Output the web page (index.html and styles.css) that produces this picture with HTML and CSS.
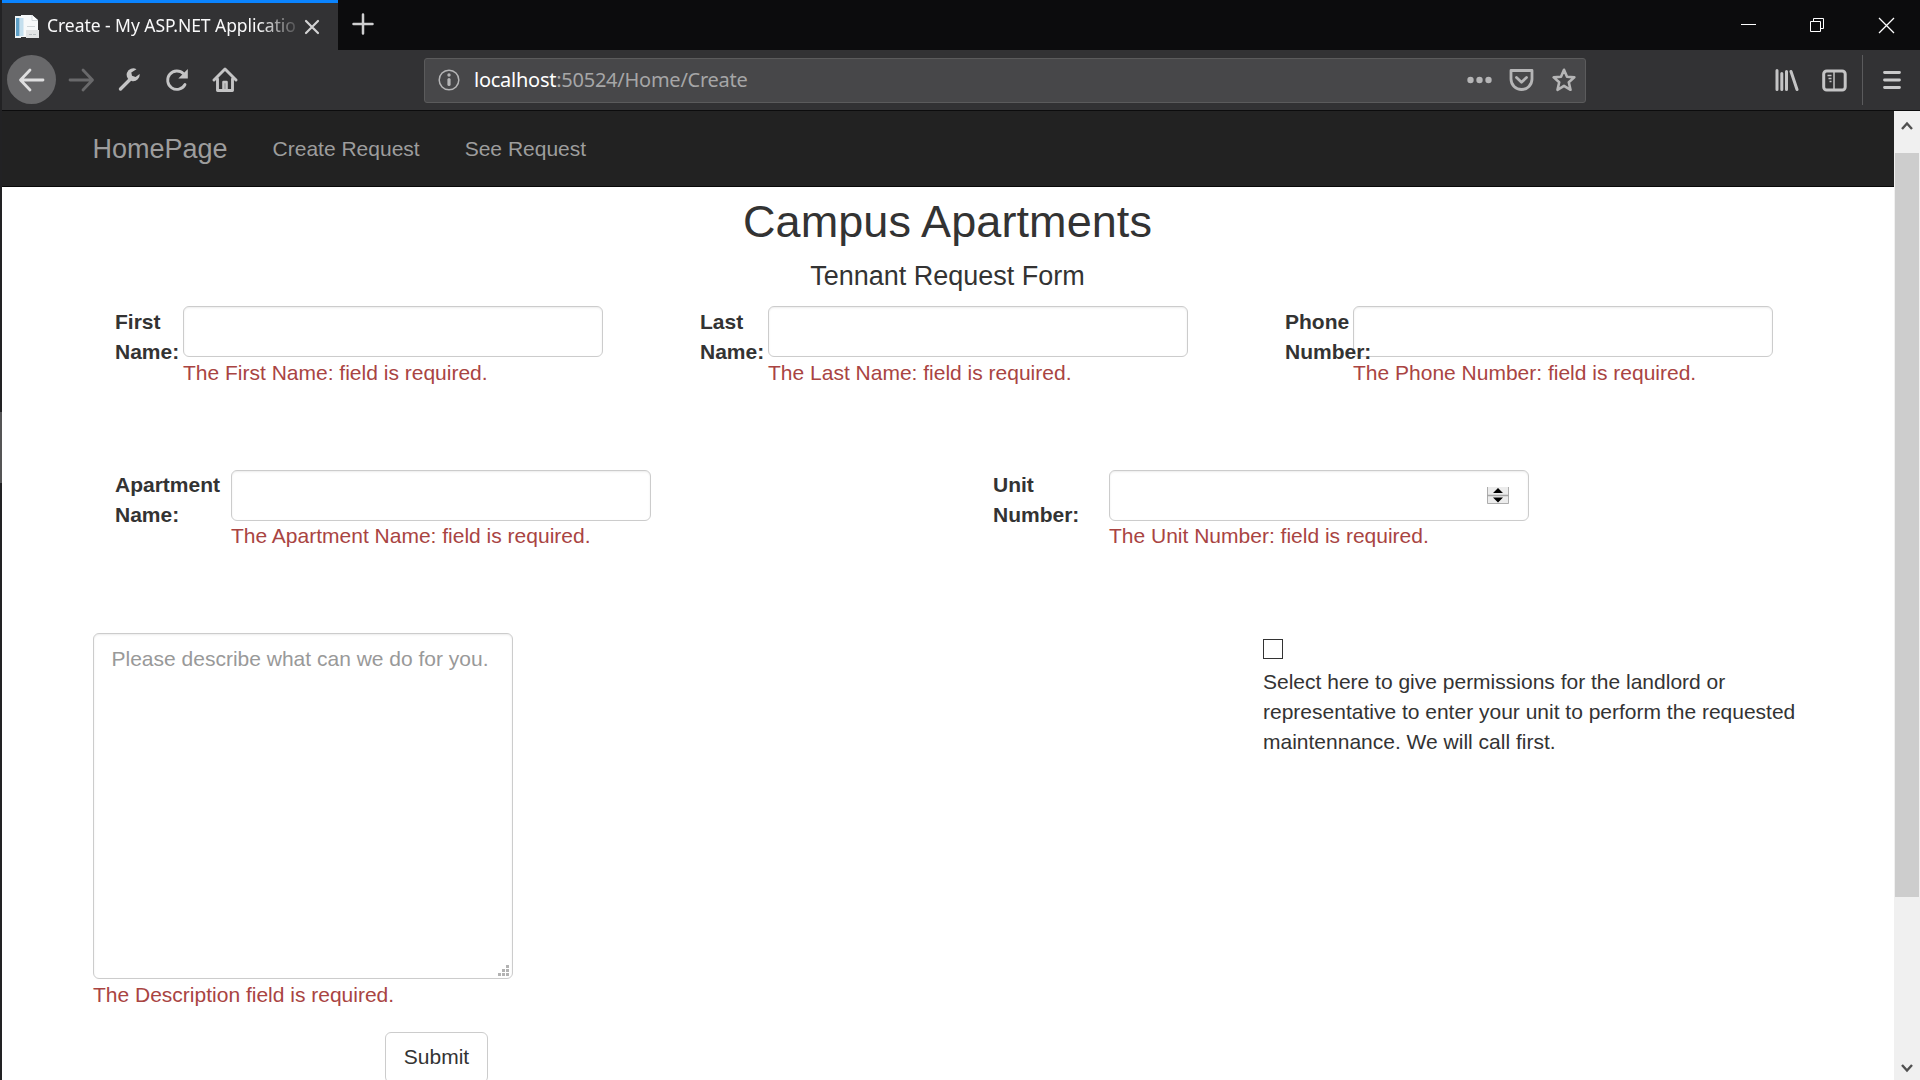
FILE: index.html
```html
<!DOCTYPE html>
<html lang="en">
<head>
<meta charset="utf-8">
<title>Create - My ASP.NET Application</title>
<link rel="stylesheet" href="styles.css">
</head>
<body>
<div class="window">
  <header class="tabbar">
    <div class="tab">
      <svg class="favicon" width="26" height="25" viewBox="0 0 26 25"><path d="M1 2h6v22H1z" fill="#eef4f7"/><path d="M2 4h3.500v18H2z" fill="#5e9fc6"/><path d="M7 1h11l6 5v17H7z" fill="#f7f9fa"/><path d="M6 4h3.500v18H6z" fill="#c4dfee"/><path d="M18 1v5.500h6" fill="#fff" stroke="#d5dbdd"/><path d="M13 12.500h8" stroke="#cfd5d8"/><path d="M12 16h13v8H12z" fill="#e2e4e5"/><path d="M15 20.500h3m1 0h3" stroke="#b8bfc2"/></svg>
      <span class="tab-title">Create - My ASP.NET Applicatio</span>
      <svg class="tab-close" width="16" height="16" viewBox="0 0 16 16"><path d="M2 2l12 12M14 2L2 14" stroke="#d2d2d3" stroke-width="2.200" stroke-linecap="round"/></svg>
    </div>
    <svg class="new-tab" width="22" height="22" viewBox="0 0 22 22"><path d="M11 1.500v19M1.500 11h19" stroke="#cfcfd0" stroke-width="2.500" stroke-linecap="round"/></svg>
    <div class="window-buttons">
      <svg width="16" height="16" viewBox="0 0 16 16"><path d="M1 7.500h15" stroke="#fff"/></svg>
      <svg width="16" height="16" viewBox="0 0 16 16" fill="none" stroke="#fff"><path d="M1.500 4.500h10v10h-10zM4.500 4.500v-3h10v10h-3"/></svg>
      <svg width="17" height="17" viewBox="0 0 17 17"><path d="M1 1l15 15M16 1L1 16" stroke="#fff" stroke-width="1.300"/></svg>
    </div>
  </header>

  <div class="toolbar">
    <div class="nav-icons">
      <div class="back"><svg width="27" height="24" viewBox="0 0 27 24" fill="none" stroke="#dededf" stroke-width="2.800" stroke-linecap="round" stroke-linejoin="round"><path d="M25 12H3M12 2L2.500 12l9.500 10"/></svg></div>
      <svg class="forward" width="27" height="24" viewBox="0 0 27 24" fill="none" stroke="#69696b" stroke-width="2.800" stroke-linecap="round" stroke-linejoin="round"><path d="M2 12h22M15 2l9.500 10L15 22"/></svg>
      <svg class="wrench" width="23" height="24" viewBox="0 0 23 24"><path d="M2.500 21L13 10.500" stroke="#c4c4c5" stroke-width="3.400" stroke-linecap="round"/><path d="M18.500 1.200A6.500 6.500 0 1 0 21.600 6l-4 3-3.600-1.200-.7-3.300z" fill="#c4c4c5"/></svg>
      <svg class="reload" width="24" height="24" viewBox="0 0 24 24" fill="none"><path d="M20 16.500A9.200 9.200 0 1 1 18.500 5.800L20 8" stroke="#c4c4c5" stroke-width="2.800" stroke-linecap="round"/><path d="M22.800 1v9.500h-9.500z" fill="#c4c4c5"/></svg>
      <svg class="home" width="26" height="26" viewBox="0 0 26 26" fill="none" stroke="#c4c4c5" stroke-linejoin="round" stroke-linecap="round"><path d="M2 13L13 2l11 11M5.500 12v11.500h15V12" stroke-width="2.900"/><path d="M11.500 22v-7h3v7" stroke-width="2.600"/></svg>
    </div>
    <div class="urlbar">
      <svg width="22" height="22" viewBox="0 0 22 22"><circle cx="11" cy="11" r="9.800" fill="none" stroke="#b5b5b6" stroke-width="1.500"/><circle cx="11" cy="6" r="1.700" fill="#b5b5b6"/><path d="M11 10.500v5" stroke="#b5b5b6" stroke-width="3.200" stroke-linecap="round"/></svg>
      <div class="url"><span class="host">localhost</span>:50524/Home/Create</div>
      <svg class="dots" width="25" height="24" viewBox="0 0 25 24" fill="#b5b5b6"><circle cx="3.500" cy="12" r="3.200"/><circle cx="12.500" cy="12" r="3.200"/><circle cx="21.500" cy="12" r="3.200"/></svg>
      <svg class="pocket" width="25" height="24" viewBox="0 0 25 24" fill="none" stroke="#b5b5b6" stroke-width="2.800" stroke-linejoin="round" stroke-linecap="round"><path d="M2 2.500h21v8.500a10.500 10.500 0 0 1-21 0z"/><path d="M7.500 9.500l5 4.700 5-4.700"/></svg>
      <svg class="star" width="24" height="24" viewBox="0 0 24 24" fill="none" stroke="#b5b5b6" stroke-width="2.600" stroke-linejoin="round"><path d="M12 1.800l3 6.900 7.300.7-5.500 4.900 1.700 7.500L12 17.900l-6.500 3.900 1.700-7.500L1.700 9.400 9 8.700z"/></svg>
    </div>
    <div class="tools">
      <svg class="library" width="24" height="24" viewBox="0 0 24 24" fill="none" stroke="#c4c4c5" stroke-width="3" stroke-linecap="round"><path d="M2 2.500v19M6.800 5.500v16M11.500 3.500v18M16 3.500l6 18"/></svg>
      <svg class="sidebar" width="25" height="23" viewBox="0 0 25 23" fill="none" stroke="#c4c4c5"><rect x="1.700" y="2" width="21.500" height="19" rx="3" stroke-width="3"/><path d="M12 2v19" stroke-width="1.500"/><path d="M5.500 6.500h4M6.500 9.500h3M7.500 12.500h2" stroke-width="1.300"/></svg>
      <svg class="menu" width="20" height="20" viewBox="0 0 20 20" stroke="#c9c9ca" stroke-width="2.800" stroke-linecap="round"><path d="M2.500 2.500h15M2.500 10h15M2.500 17.500h15"/></svg>
    </div>
  </div>

  <div class="viewport">
    <div class="page">
      <nav class="navbar">
        <a class="brand">HomePage</a>
        <a class="nav-link">Create Request</a>
        <a class="nav-link">See Request</a>
      </nav>
      <main class="container">
        <h2 class="title">Campus Apartments</h2>
        <h4 class="subtitle">Tennant Request Form</h4>
        <form class="form">
          <div class="row thirds">
            <div class="field">
              <label class="label" for="first">First<br>Name:</label>
              <div class="control"><input class="input" id="first" type="text"><span class="error">The First Name: field is required.</span></div>
            </div>
            <div class="field">
              <label class="label" for="last">Last<br>Name:</label>
              <div class="control"><input class="input" id="last" type="text"><span class="error">The Last Name: field is required.</span></div>
            </div>
            <div class="field">
              <label class="label" for="phone">Phone<br>Number:</label>
              <div class="control"><input class="input" id="phone" type="text"><span class="error">The Phone Number: field is required.</span></div>
            </div>
          </div>
          <div class="row halves">
            <div class="field">
              <label class="label" for="apartment">Apartment<br>Name:</label>
              <div class="control"><input class="input" id="apartment" type="text"><span class="error">The Apartment Name: field is required.</span></div>
            </div>
            <div class="field">
              <label class="label" for="unit">Unit<br>Number:</label>
              <div class="control">
                <input class="input" id="unit" type="text">
                <svg class="spinner" width="22" height="20" viewBox="0 0 22 20"><path d="M0 2h22v17H0z" fill="#ececec"/><path d="M.5 2v16.500h21V2" fill="none" stroke="#adadad"/><path d="M0 10.500h22" stroke="#a6a6a6" stroke-width="1.500"/><path d="M6 8l5-5 5 5zM6 12.500h10l-5 5z" fill="#000"/></svg>
                <span class="error">The Unit Number: field is required.</span>
              </div>
            </div>
          </div>
          <div class="row details">
            <div class="description">
              <textarea class="input textarea" placeholder="Please describe what can we do for you."></textarea>
              <svg class="grip" width="12" height="12" viewBox="0 0 12 12" fill="#b3b3b3"><path d="M8 0h3v3H8zM4 4h3v3H4zM8 4h3v3H8zM0 8h3v3H0zM4 8h3v3H4zM8 8h3v3H8z"/></svg>
              <span class="error">The Description field is required.</span>
              <button class="submit" type="button">Submit</button>
            </div>
            <div class="permission">
              <input class="checkbox" type="checkbox" aria-label="Permission to enter">
              <p class="permission-text">Select here to give permissions for the landlord or representative to enter your unit to perform the requested maintennance. We will call first.</p>
            </div>
          </div>
        </form>
      </main>
    </div>
    <div class="scrollbar">
      <svg width="12" height="10" viewBox="0 0 12 10"><path d="M1 8l5-5.500L11 8" fill="none" stroke="#505050" stroke-width="2.400"/></svg>
      <div class="thumb"></div>
      <svg width="12" height="10" viewBox="0 0 12 10"><path d="M1 2l5 5.500L11 2" fill="none" stroke="#505050" stroke-width="2.400"/></svg>
    </div>
  </div>
</div>
</body>
</html>
```
FILE: styles.css
```css
* {
  box-sizing: border-box;
}

body {
  margin: 0;
  overflow: hidden;
  font-family: "Liberation Sans", Arial, sans-serif;
  font-size: 21px;
  line-height: 30px;
  color: #333;
}

svg {
  display: block;
  flex: none;
}

.window {
  display: flex;
  flex-direction: column;
  height: 1080px;
  border-left: 2px solid #222224;
  border-image: linear-gradient(#222224 38.200%, #555556 38.200%, #555556 44.700%, #222224 44.700%) 1;
  overflow: hidden;
}

/* Browser chrome */
.tabbar {
  display: flex;
  flex: none;
  height: 50px;
  background: #0c0c0d;
}

.tab {
  display: flex;
  align-items: center;
  width: 336px;
  height: 50px;
  padding: 0 18px 0 12px;
  border-top: 3px solid #0a84ff;
  background: #323234;
}

.tab-title {
  flex: 1;
  min-width: 0;
  margin: 0 4px 0 7px;
  padding-bottom: 3px;
  font-family: "Noto Sans", sans-serif;
  font-size: 17.500px;
  letter-spacing: -0.050px;
  white-space: nowrap;
  color: #f9f9fa;
  -webkit-mask-image: linear-gradient(90deg, #000 84%, transparent 101%);
  mask-image: linear-gradient(90deg, #000 84%, transparent 101%);
}

.new-tab {
  margin: 13px 0 0 14px;
}

.window-buttons {
  display: flex;
  align-items: center;
  gap: 53px;
  margin-left: auto;
  padding-right: 25px;
}

.toolbar {
  display: flex;
  flex: none;
  align-items: center;
  height: 61px;
  border-bottom: 1px solid #0c0c0d;
  background: #323234;
}

.nav-icons {
  display: flex;
  align-items: center;
  width: 422px;
  padding: 0 0 1px 5px;
}

.back {
  display: flex;
  align-items: center;
  justify-content: center;
  width: 49px;
  height: 49px;
  border-radius: 50%;
  background: #68686a;
}

.forward {
  margin-left: 12px;
}

.wrench {
  margin-left: 23px;
}

.reload {
  margin-left: 24px;
}

.home {
  margin-left: 23px;
}

.urlbar {
  display: flex;
  align-items: center;
  width: 1162px;
  height: 45px;
  padding: 0 9px 0 13px;
  border: 1px solid #5b5b5c;
  border-radius: 3px;
  background: #474749;
}

.url {
  flex: 1;
  margin-left: 14px;
  font-family: "Noto Sans", sans-serif;
  font-size: 20px;
  letter-spacing: -0.250px;
  color: #a6a6a7;
}

.host {
  color: #fff;
}

.pocket {
  margin-left: 17px;
}

.star {
  margin-left: 18px;
}

.tools {
  display: flex;
  flex: 1;
  align-items: center;
  height: 100%;
  padding: 0 18px 0 189px;
}

.sidebar {
  margin-left: 23px;
}

.menu {
  box-sizing: content-box;
  margin-left: 15px;
  padding: 15px 0 15px 19px;
  border-left: 1px solid #5b5b5d;
}

/* Page */
.viewport {
  display: flex;
  flex: 1;
  min-height: 0;
}

.page {
  flex: 1;
  min-width: 0;
  overflow: hidden;
  background: #fff;
}

.navbar {
  display: flex;
  align-items: center;
  gap: 45px;
  height: 76px;
  padding-left: 90.500px;
  border-bottom: 1px solid #080808;
  background: #222;
  color: #9d9d9d;
}

.brand {
  font-size: 27px;
}

.container {
  width: 1755px;
  margin-left: 91px;
}

.title,
.subtitle {
  margin: 0;
  padding-right: 46px;
  font-weight: 400;
  text-align: center;
}

.title {
  padding-top: 10px;
  font-size: 45px;
  line-height: 50px;
  letter-spacing: 0.080px;
}

.subtitle {
  padding-top: 14px;
  font-size: 27px;
  line-height: 30px;
}

.form {
  padding-top: 15px;
}

.row {
  display: grid;
}

.thirds {
  grid-template-columns: repeat(3, 585px);
  height: 164px;
}

.halves {
  grid-template-columns: repeat(2, 878px);
  height: 163px;
}

.field {
  display: flex;
  align-items: flex-start;
  padding-left: 22px;
}

.label {
  position: relative;
  z-index: 1;
  flex: none;
  width: 68px;
  white-space: nowrap;
  font-weight: 700;
}

.halves .label {
  width: 116px;
}

.control {
  position: relative;
  display: flex;
  flex-direction: column;
}

.input {
  display: block;
  width: 420px;
  height: 51px;
  margin: 0;
  padding: 9px 18px;
  border: 1px solid #ccc;
  border-radius: 6px;
  background: #fff;
  box-shadow: inset 0 1px 2px rgba(0, 0, 0, 0.075);
  font: inherit;
}

.error {
  display: block;
  color: #a94442;
}

.thirds .label,
.thirds .error,
.description .error {
  padding-top: 1px;
}

.spinner {
  position: absolute;
  top: 15px;
  right: 20px;
}

.details {
  grid-template-columns: 1170px 540px;
}

.description {
  position: relative;
}

.textarea {
  height: 346px;
  padding: 10px 17.500px;
  resize: none;
  overflow: hidden;
}

.textarea::placeholder {
  color: #999;
  opacity: 1;
}

.grip {
  position: absolute;
  top: 332px;
  left: 405px;
}

.submit {
  display: block;
  width: 103px;
  height: 51px;
  margin: 22px 0 0 292px;
  padding: 0 0 2px;
  border: 1px solid #ccc;
  border-radius: 6px;
  background: #fff;
  font: inherit;
  color: #333;
}

.checkbox {
  display: block;
  width: 20px;
  height: 20px;
  margin: 6px 0 0;
  appearance: none;
  border: 1px solid #333;
  background: #fff;
}

.permission-text {
  margin: 8px 0 0;
}

.scrollbar {
  display: flex;
  flex: none;
  flex-direction: column;
  align-items: center;
  width: 26px;
  padding: 10px 0 7px;
  background: #f0f0f0;
}

.thumb {
  width: 24px;
  height: 744px;
  margin: 22px 0 auto;
  background: #cdcdcd;
}
```
